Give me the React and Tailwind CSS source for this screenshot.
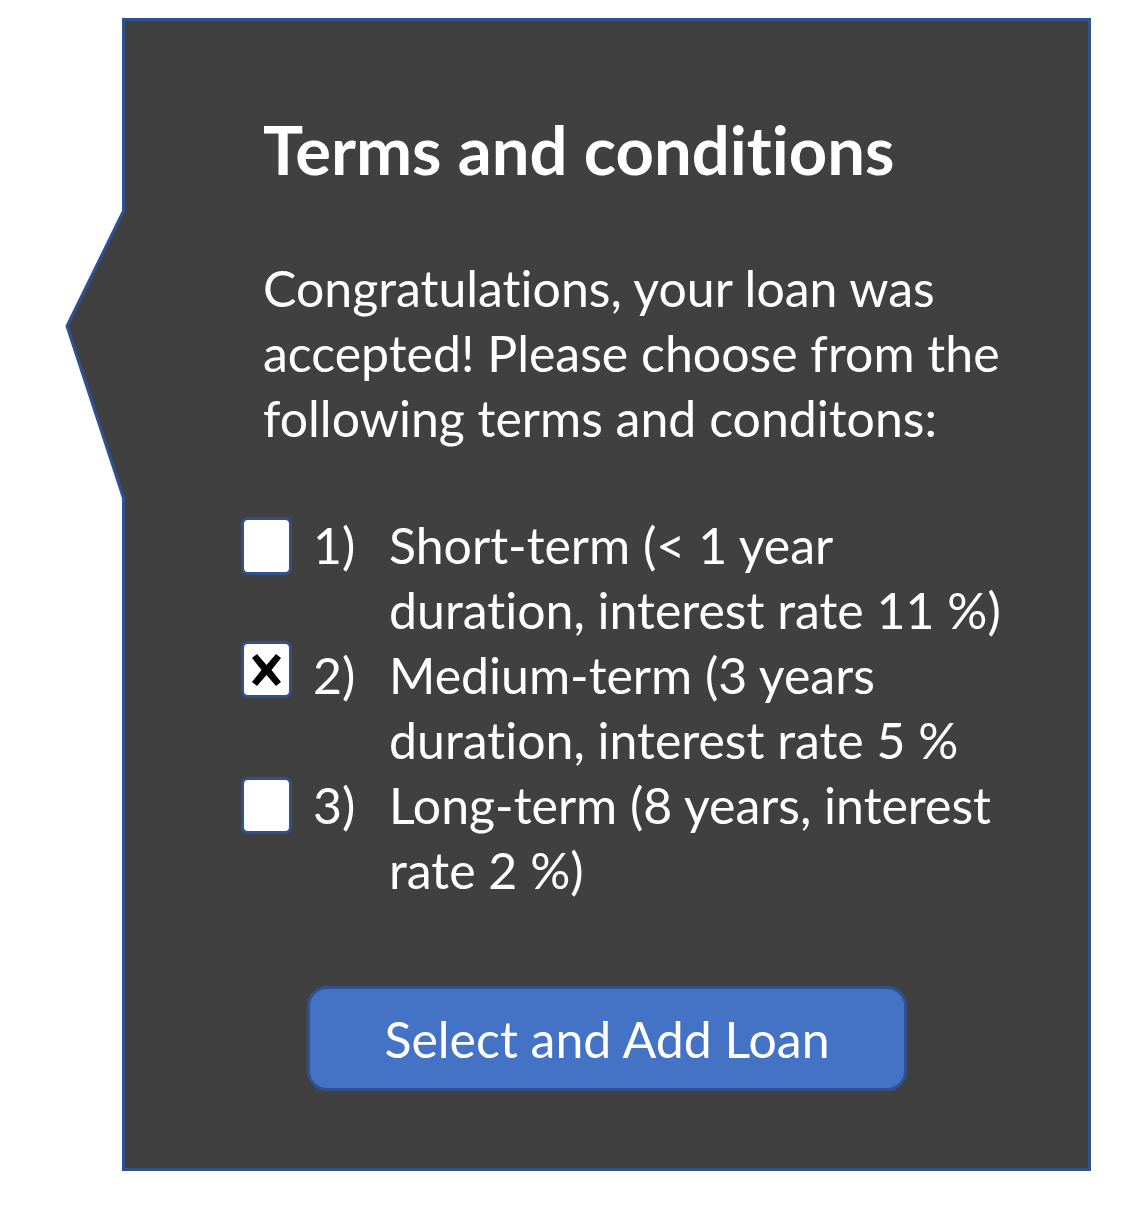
const options = [
  { num: '1)', lines: ['Short-term (< 1 year', 'duration, interest rate 11 %)'], checked: false, offset: 'mt-[4px] h-[58px]' },
  { num: '2)', lines: ['Medium-term (3 years', 'duration, interest rate 5 %'], checked: true, offset: 'mt-[-2px] h-[57px]' },
  { num: '3)', lines: ['Long-term (8 years, interest', 'rate 2 %)'], checked: false, offset: 'mt-[4px] h-[57px]' },
];

function CalloutArrow() {
  return (
    <svg
      className="absolute left-[-60px] top-[184px]"
      width="64"
      height="300"
      viewBox="0 0 64 300"
    >
      <polygon points="58.5,6 2,121 58.5,293 64,293 64,6" fill="#404040" />
      <polyline
        points="58.5,6 2,121 58.5,293"
        fill="none"
        stroke="#2F528F"
        strokeWidth="3"
        strokeLinejoin="miter"
      />
    </svg>
  );
}

function CrossMark() {
  return (
    <svg width="31" height="34" viewBox="0 0 31 34">
      <path d="M1 5 L6 1 L15.5 12 L25 1 L30 5 L20.5 17 L30 29 L25 33 L15.5 22 L6 33 L1 29 L10.5 17 Z" fill="#000" />
    </svg>
  );
}

function Checkbox({ checked, offset }) {
  return (
    <div
      className={`${offset} flex w-[51px] shrink-0 items-center justify-center rounded-[7px] border-[3px] border-[#2F528F] bg-white`}
    >
      {checked && <CrossMark />}
    </div>
  );
}

export default function App() {
  return (
    <div className="min-h-[1206px] bg-white pl-[122px] pt-[18px] font-['Lato',sans-serif] text-white [font-variant-ligatures:none]">
      <div className="relative h-[1153px] w-[969px] border-[3px] border-[#2F528F] bg-[#404040]">
        <CalloutArrow />
        <div className="relative pl-[116px] pt-[95px]">
          <h1 className="ml-[22px] text-[67px] font-bold leading-[67px]">Terms and conditions</h1>
          <p className="ml-[22px] mt-[73px] whitespace-nowrap text-[50px] leading-[65px]">
            Congratulations, your loan was
            <br />
            accepted! Please choose from the
            <br />
            following terms and conditons:
          </p>

          <div className="mt-[62px] flex flex-col">
            {options.map((option) => (
              <div key={option.num} className="flex items-start">
                <Checkbox checked={option.checked} offset={option.offset} />
                <span className="ml-[21px] w-[76px] shrink-0 text-[50px] leading-[65px]">{option.num}</span>
                <div className="whitespace-nowrap text-[50px] leading-[65px]">
                  {option.lines.map((line) => (
                    <div key={line}>{line}</div>
                  ))}
                </div>
              </div>
            ))}
          </div>

          <button
            type="button"
            className="ml-[66px] mt-[83px] flex h-[105px] w-[600px] items-center justify-center rounded-[20px] border-[3px] border-[#2F528F] bg-[#4472C4] text-[50px] leading-none text-white"
          >
            Select and Add Loan
          </button>
        </div>
      </div>
    </div>
  );
}
